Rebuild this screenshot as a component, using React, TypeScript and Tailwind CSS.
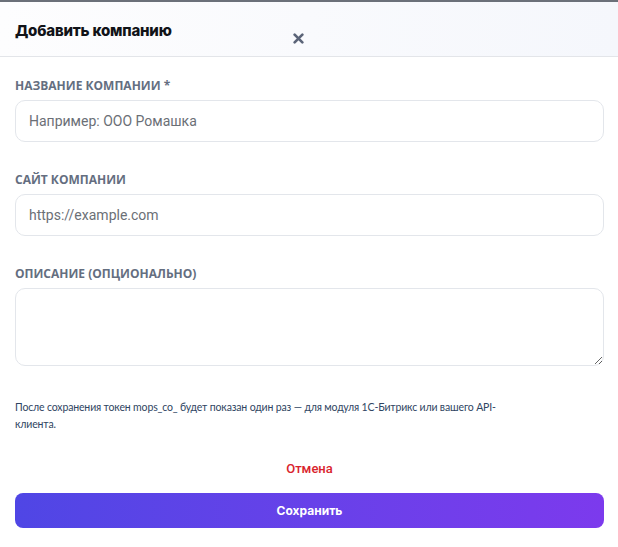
import { useState } from "react"

type Field = {
  key: string
  label: string
  placeholder: string
  multiline?: boolean
}

const FIELDS: Field[] = [
  { key: "name", label: "Название компании *", placeholder: "Например: ООО Ромашка" },
  { key: "site", label: "Сайт компании", placeholder: "https://example.com" },
  { key: "description", label: "Описание (опционально)", placeholder: "", multiline: true },
]

const inputCls =
  "w-full rounded-[10px] border border-[#e3e6eb] bg-white px-[13px] text-[14px] text-[#1f2937] placeholder:text-[#6b6f76] outline-none font-['Roboto',sans-serif]"

export default function App() {
  const [values, setValues] = useState<Record<string, string>>({})

  return (
    <div className="min-h-[547px] bg-[#6b7079] pt-[2px]">
      <div className="min-h-[545px] rounded-t-[10px] bg-white">
        {/* Header */}
        <div className="flex h-[55px] border-b border-[#e3e5e9] bg-gradient-to-r from-[#fdfdfe] to-[#f5f7fc] pl-[15px]">
          <div className="flex w-[289px] items-start justify-between">
            <h2 className="mt-[20px] font-['Inter',sans-serif] text-[15px] font-extrabold leading-[18px] tracking-[-0.2px] text-[#111318]">
              Добавить компанию
            </h2>
            <button className="mt-[31px] text-[#5b6478]" aria-label="Закрыть">
              <svg width="11" height="11" viewBox="0 0 10 10" fill="none">
                <path d="M1.5 1.5l7 7M8.5 1.5l-7 7" stroke="currentColor" strokeWidth="2.4" strokeLinecap="round" />
              </svg>
            </button>
          </div>
        </div>

        {/* Body */}
        <div className="pl-[15px] pr-[14px] pt-[21px]">
          {FIELDS.map((f) => (
            <div key={f.key} className="mb-[30px]">
              <label className="mb-[6px] block font-['Open_Sans',sans-serif] text-[12px] font-bold uppercase leading-[16px] text-[#646e80]">
                {f.label}
              </label>
              {f.multiline ? (
                <textarea
                  className={`${inputCls} block h-[78px] py-[10px]`}
                  value={values[f.key] || ""}
                  onChange={(e) => setValues({ ...values, [f.key]: e.target.value })}
                />
              ) : (
                <input
                  className={`${inputCls} h-[42px]`}
                  placeholder={f.placeholder}
                  value={values[f.key] || ""}
                  onChange={(e) => setValues({ ...values, [f.key]: e.target.value })}
                />
              )}
            </div>
          ))}

          <p className="mt-[33px] font-['Lato',sans-serif] text-[10.5px] leading-[17px] tracking-[-0.15px] text-[#2f4562]">
            После сохранения токен mops_co_ будет показан один раз — для модуля 1С-Битрикс или вашего API-
            <br />
            клиента.
          </p>

          <div className="mt-[22px] text-center">
            <button className="font-['Roboto',sans-serif] text-[13px] font-medium leading-[18px] text-[#d9232d]">
              Отмена
            </button>
          </div>

          <button className="mt-[14px] flex h-[35px] w-full items-center justify-center rounded-[8px] bg-gradient-to-r from-[#4f46e5] to-[#7c3aed] font-['Inter',sans-serif] text-[12px] font-bold text-white">
            Сохранить
          </button>
        </div>
      </div>
    </div>
  )
}
